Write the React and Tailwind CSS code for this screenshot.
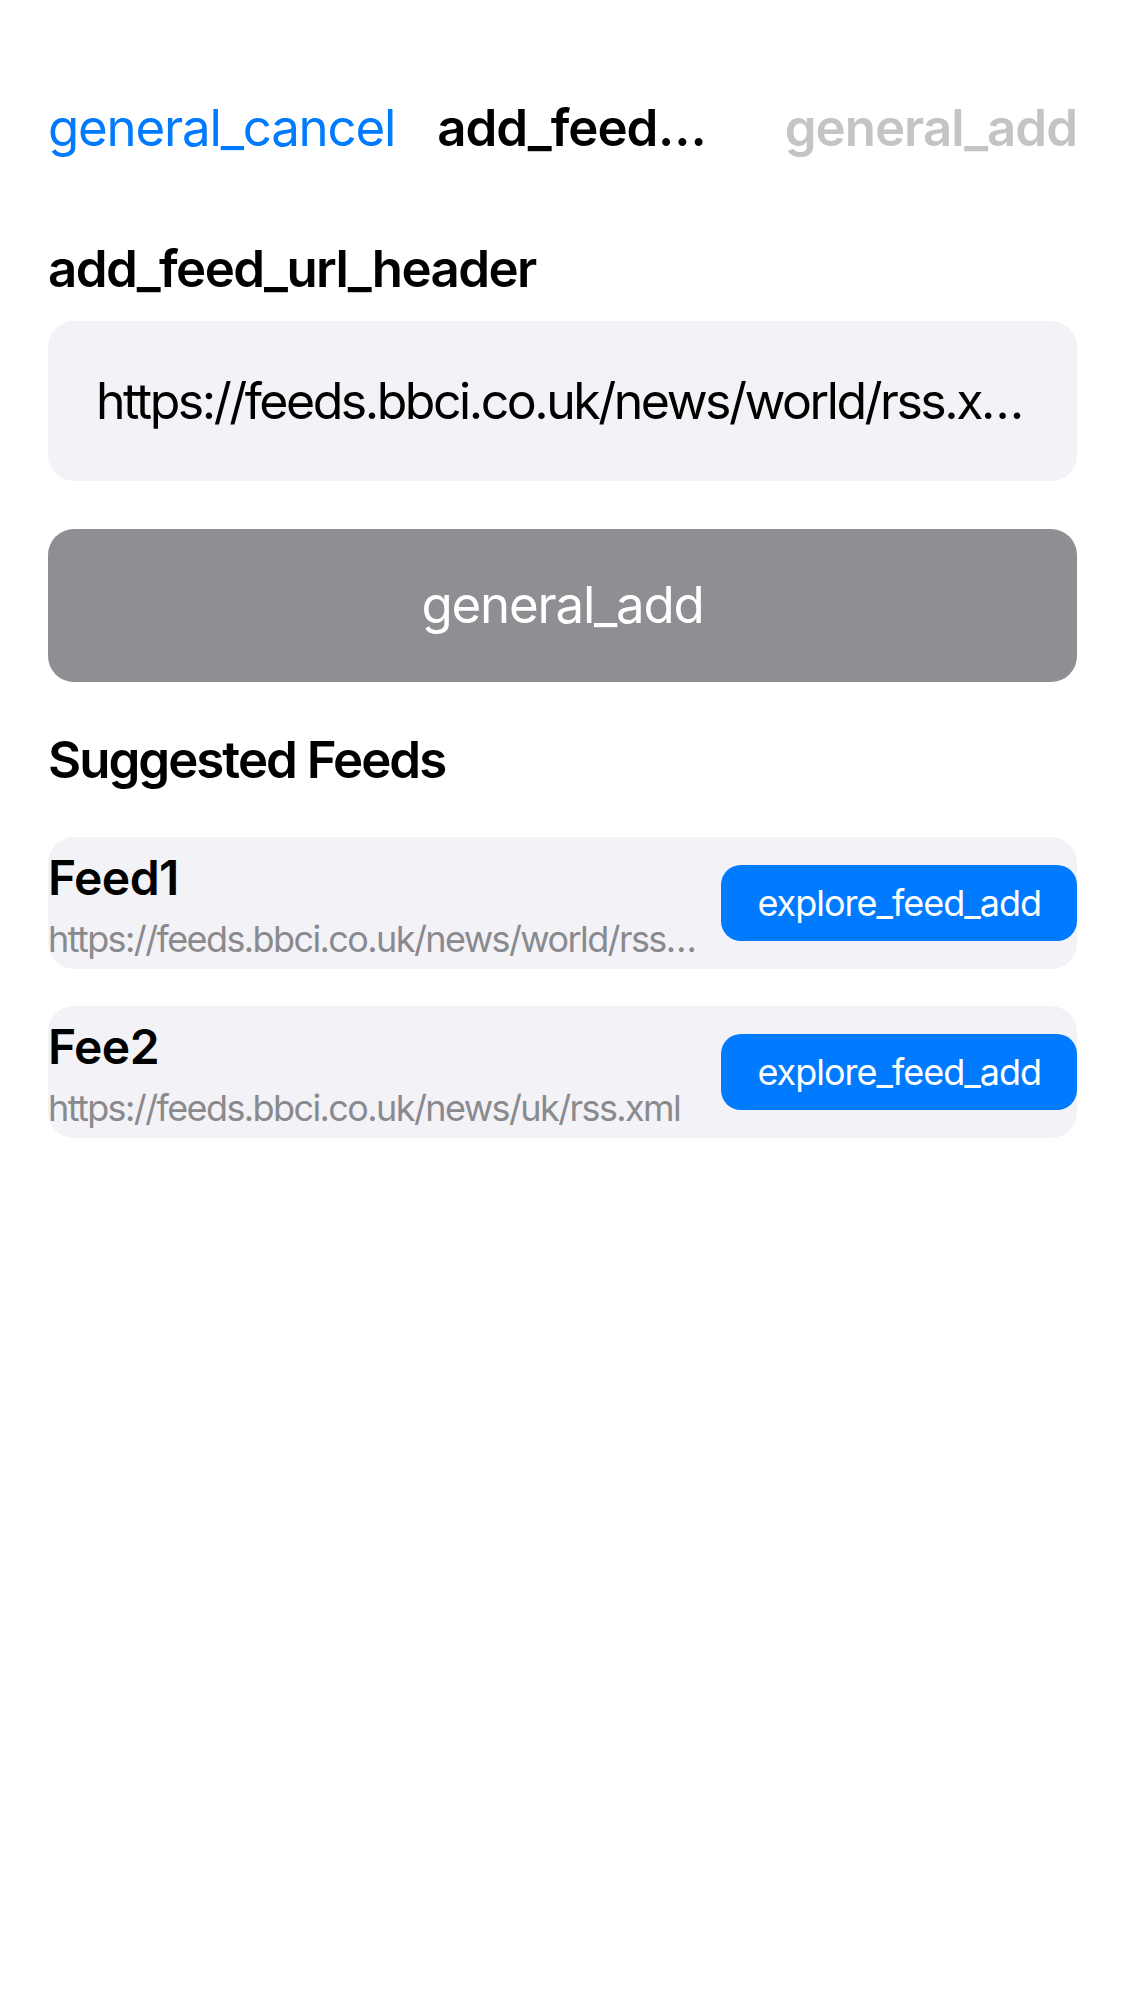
import React, { useState } from "react";

const feeds = [
  { title: "Feed1", url: "https://feeds.bbci.co.uk/news/world/rss.xml" },
  { title: "Fee2", url: "https://feeds.bbci.co.uk/news/uk/rss.xml" },
];

const App = () => {
  const [url, setUrl] = useState("https://feeds.bbci.co.uk/news/world/rss.xml");

  return (
    <div
      className="min-h-screen w-full bg-white px-[48px] text-black"
      style={{ fontFamily: "Inter, 'Noto Sans', sans-serif" }}
    >
      {/* nav bar */}
      <div className="flex items-center pt-[98px] text-[51px] leading-[60px] tracking-[-1.2px]">
        <button className="shrink-0 text-[#007aff]">general_cancel</button>
        <div className="ml-[42px] w-[272px] truncate font-semibold tracking-[-1px]">
          add_feed_title
        </div>
        <button className="ml-auto shrink-0 font-semibold tracking-[-1px] text-[#c4c4c6]" disabled>
          general_add
        </button>
      </div>

      <h2 className="mt-[81px] text-[51px] font-semibold leading-[60px] tracking-[-1.6px]">
        add_feed_url_header
      </h2>

      <div className="mt-[22px] flex h-[160px] items-center rounded-[26px] bg-[#f2f2f7] px-[48px]">
        <input
          className="w-full min-w-0 truncate bg-transparent text-[50px] tracking-[-2.47px] outline-none"
          value={url}
          onChange={(e) => setUrl(e.target.value)}
        />
      </div>

      <button className="mt-[48px] flex h-[153px] w-full items-center justify-center rounded-[26px] bg-[#8e8e93] text-[51px] tracking-[-1.2px] text-white">
        general_add
      </button>

      <h2 className="mt-[48px] text-[51px] font-semibold leading-[60px] tracking-[-2px]">
        Suggested Feeds
      </h2>

      <div className="mt-[47px] flex flex-col gap-[37px]">
        {feeds.map((feed) => (
          <div
            key={feed.title}
            className="flex h-[132px] items-center gap-[16px] rounded-[26px] bg-[#f2f2f7]"
          >
            <div className="mt-[8px] flex min-w-0 flex-1 flex-col">
              <span className="truncate text-[48px] font-semibold leading-[64px] tracking-[-0.6px]">
                {feed.title}
              </span>
              <span className="truncate text-[36px] leading-[58px] tracking-[-1.6px] text-[#8a8a8e]">
                {feed.url}
              </span>
            </div>
            <button className="flex h-[76px] shrink-0 items-center rounded-[20px] bg-[#007aff] px-[36px] text-[36px] tracking-[-1px] text-white">
              explore_feed_add
            </button>
          </div>
        ))}
      </div>
    </div>
  );
};

export default App;
